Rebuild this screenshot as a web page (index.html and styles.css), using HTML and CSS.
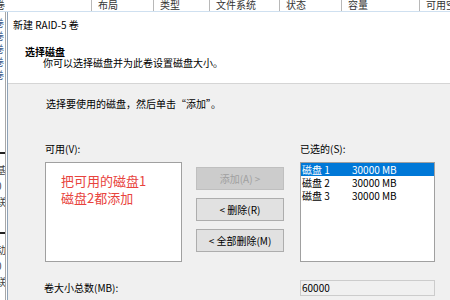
FILE: index.html
```html
<!DOCTYPE html>
<html lang="zh-CN">
<head>
    <meta charset="UTF-8">
    <title>新建 RAID-5 卷</title>
    <link rel="stylesheet" href="styles.css">
</head>
<body>
    <div class="desk">
        <!-- column header of the disk management window behind -->
        <div class="cols">
            <span class="col c-vol">卷</span>
            <span class="col c-layout">布局</span>
            <span class="col c-type">类型</span>
            <span class="col c-fs">文件系统</span>
            <span class="col c-state">状态</span>
            <span class="col c-cap">容量</span>
            <span class="col c-free">可用空间</span>
        </div>

        <div class="main">
            <div class="strip">
                <div class="strip-rows">
                    <span>卷</span><span>卷</span><span>卷</span><span>卷</span><span>卷</span>
                </div>
                <div class="strip-disk">
                    <i class="bar"></i>
                    <span>基</span><span>0</span><span>联</span>
                </div>
                <div class="strip-disk">
                    <i class="bar"></i>
                    <span>动</span><span>0</span><span>联</span>
                </div>
            </div>

            <div class="dialog">
                <div class="titlebar">新建 RAID-5 卷</div>
                <div class="head">
                    <div class="head-title">选择磁盘</div>
                    <div class="head-sub">你可以选择磁盘并为此卷设置磁盘大小。</div>
                </div>

                <div class="body">
                    <p class="intro">选择要使用的磁盘，然后单击“添加”。</p>

                    <div class="picker">
                        <div class="label">可用(V):</div>
                        <div></div>
                        <div class="label">已选的(S):</div>

                        <div class="listbox">
                            <div class="note">把可用的磁盘1<br>磁盘2都添加</div>
                        </div>
                        <div class="btns">
                            <button class="btn" disabled>添加(A) &gt;</button>
                            <button class="btn">&lt; 删除(R)</button>
                            <button class="btn">&lt; 全部删除(M)</button>
                        </div>
                        <div class="listbox">
                            <div class="row selected"><span class="disk">磁盘 1</span><span>30000 MB</span></div>
                            <div class="row"><span class="disk">磁盘 2</span><span>30000 MB</span></div>
                            <div class="row"><span class="disk">磁盘 3</span><span>30000 MB</span></div>
                        </div>

                        <div class="label total-label">卷大小总数(MB):</div>
                        <div></div>
                        <div class="field">60000</div>
                    </div>
                </div>
            </div>
        </div>
    </div>
</body>
</html>
```

FILE: styles.css
```css
body {
    margin: 0;
    font-family: "Noto Sans CJK SC", "Liberation Sans", sans-serif;
    font-size: 10px;
    color: #000;
    background-color: #fff;
}

.desk {
    width: 450px;
    height: 300px;
    overflow: hidden;
}

/* background window header */
.cols {
    display: flex;
    height: 11px;
    overflow: hidden;
    border-bottom: 1px solid #cfe0f0;
    background-color: #fff;
}

.col {
    flex: none;
    box-sizing: border-box;
    padding-left: 6px;
    line-height: 12px;
    margin-top: -1px;
    border-right: 1px solid #b8b8b8;
    color: #333;
    white-space: nowrap;
}

.c-vol { width: 92px; padding-left: 0; text-indent: -5px; }
.c-layout { width: 62px; }
.c-type { width: 56px; }
.c-fs { width: 70px; }
.c-state { width: 62px; }
.c-cap { width: 78px; }
.c-free { width: 60px; border-right: none; }

.main {
    display: flex;
    height: 288px;
}

/* clipped edge of the window behind */
.strip {
    flex: none;
    width: 5px;
    overflow: hidden;
    border-right: 1px solid #a8a8a8;
    margin-right: 1px;
    font-size: 10px;
    color: #444;
}

.strip span {
    display: block;
    height: 13px;
    line-height: 13px;
    text-indent: -6px;
    white-space: nowrap;
}

.strip-rows {
    padding-top: 4px;
    height: 136px;
}

.strip-rows span {
    color: #3a5a8a;
}

.strip-disk {
    height: 80px;
}

.strip-disk .bar {
    display: block;
    height: 2px;
    background-color: #222;
    margin-bottom: 8px;
}

.strip-disk span {
    height: 16px;
    line-height: 16px;
    text-indent: -4px;
}

/* dialog */
.dialog {
    flex: 1;
    border-left: 1px solid #8fa3b8;
    background-color: #f0f0f0;
}

.titlebar {
    height: 24px;
    line-height: 26px;
    padding-left: 5px;
    background-color: #fff;
}

.head {
    height: 48px;
    box-sizing: border-box;
    padding-top: 10px;
    background-color: #fff;
    border-bottom: 1px solid #d5d5d5;
}

.head-title {
    padding-left: 17px;
    font-weight: bold;
    line-height: 11px;
}

.head-sub {
    padding-left: 35px;
    line-height: 11px;
}

.body {
    padding-left: 37px;
}

.intro {
    margin: 13px 0 0 1px;
    line-height: 14px;
}

.picker {
    display: grid;
    grid-template-columns: 137px 88px 137px;
    column-gap: 14px;
    margin-top: 31px;
}

.picker > :nth-child(3n+3) {
    margin-left: 2px;
}

.label {
    line-height: 14px;
    height: 20px;
}

.listbox {
    height: 100px;
    box-sizing: border-box;
    border: 1px solid #a0a0a0;
    background-color: #fff;
    overflow: hidden;
}

.note {
    padding: 9px 0 0 15px;
    font-size: 13px;
    line-height: 17px;
    color: #e8433d;
}

.btns {
    display: flex;
    flex-direction: column;
    gap: 8px;
    padding-top: 5px;
}

.btn {
    height: 23px;
    padding: 0;
    font-family: inherit;
    font-size: 10px;
    color: #000;
    background-color: #e1e1e1;
    border: 1px solid #adadad;
}

.btn:disabled {
    color: #a0a0a0;
    background-color: #cccccc;
    border-color: #bfbfbf;
}

.row {
    display: flex;
    height: 13px;
    line-height: 13px;
    padding-left: 1px;
    white-space: nowrap;
}

.row .disk {
    width: 50px;
}

.row.selected {
    color: #fff;
    background-color: #0078d7;
}

.total-label {
    margin-top: 18px;
    height: 16px;
    line-height: 16px;
    margin-left: -1px;
}

.field {
    margin-top: 18px;
    height: 16px;
    box-sizing: border-box;
    line-height: 14px;
    padding-left: 1px;
    border: 1px solid #cccccc;
    background-color: #f0f0f0;
}
```
